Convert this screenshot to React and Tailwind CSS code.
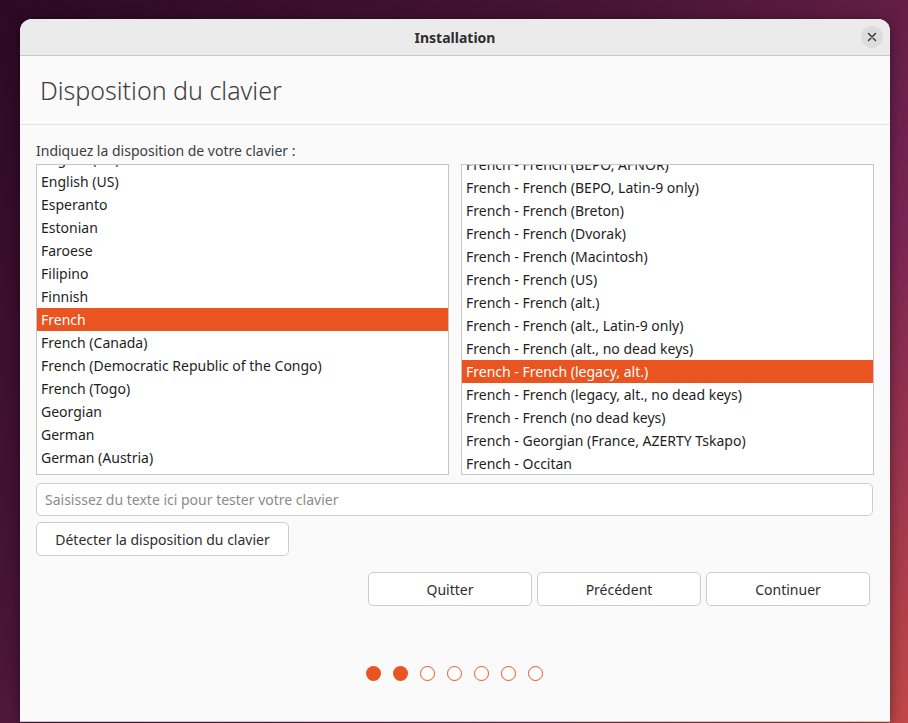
import React from "react";

const leftItems = [
  "English (UK)",
  "English (US)",
  "Esperanto",
  "Estonian",
  "Faroese",
  "Filipino",
  "Finnish",
  "French",
  "French (Canada)",
  "French (Democratic Republic of the Congo)",
  "French (Togo)",
  "Georgian",
  "German",
  "German (Austria)",
  "German (Switzerland)",
];

const rightItems = [
  "French - French (BEPO, AFNOR)",
  "French - French (BEPO, Latin-9 only)",
  "French - French (Breton)",
  "French - French (Dvorak)",
  "French - French (Macintosh)",
  "French - French (US)",
  "French - French (alt.)",
  "French - French (alt., Latin-9 only)",
  "French - French (alt., no dead keys)",
  "French - French (legacy, alt.)",
  "French - French (legacy, alt., no dead keys)",
  "French - French (no dead keys)",
  "French - Georgian (France, AZERTY Tskapo)",
  "French - Occitan",
  "French - Occitan (Lengadocian)",
];

function ListBox({ items, selected, offsetClass }) {
  return (
    <div className="h-[311px] overflow-hidden border border-[#c6c6c4] bg-white">
      <div className={offsetClass}>
        {items.map((it) => (
          <div
            key={it}
            className={
              "h-[23px] flex items-center pl-[4px] whitespace-nowrap text-[14px] " +
              (it === selected ? "bg-[#e95420] text-white" : "text-[#1e1e1e]")
            }
          >
            {it}
          </div>
        ))}
      </div>
    </div>
  );
}

function Dot({ filled }) {
  return (
    <div
      className={
        "w-[15px] h-[15px] rounded-full " +
        (filled ? "bg-[#e95420]" : "border-[1.5px] border-[#e95420] bg-white")
      }
    />
  );
}

export default function App() {
  return (
    <div
      className="w-[908px] h-[723px] overflow-hidden bg-[linear-gradient(135deg,#2c0924_0%,#4a1537_40%,#7b2553_70%,#c24848_100%)] pt-[19px] pl-[20px]"
      style={{ fontFamily: '"Noto Sans", "Open Sans", sans-serif' }}
    >
      <div className="w-[870px] h-[703px] rounded-t-[12px] bg-[#fafafa] shadow-[0_2px_14px_rgba(0,0,0,0.45)] flex flex-col border-b border-[#c8c8c8]">
        {/* header bar */}
        <div className="relative h-[37px] shrink-0 rounded-t-[12px] bg-[#ebebeb] border-b border-[#c9c9c9] flex items-center justify-center">
          <span className="text-[14px] font-bold text-[#2e2e2e]">Installation</span>
          <div className="absolute right-[7px] top-[7px] w-[22px] h-[22px] rounded-full bg-[#dcdcdc] flex items-center justify-center">
            <svg width="10" height="10" viewBox="0 0 10 10">
              <path d="M1.5 1.5 L8.5 8.5 M8.5 1.5 L1.5 8.5" stroke="#2e2e2e" strokeWidth="1.4" strokeLinecap="round" />
            </svg>
          </div>
        </div>

        {/* title */}
        <div className="h-[69px] shrink-0 border-b border-[#e3e3e3] flex items-center pl-[20px]">
          <h1 className="text-[25px] font-light text-[#3d3d3d] leading-none pt-[1px]">Disposition du clavier</h1>
        </div>

        {/* content */}
        <div className="flex flex-col px-[16px] pt-[17px]">
          <div className="text-[14px] text-[#3d3d3d] leading-[18px] h-[22px]">
            Indiquez la disposition de votre clavier :
          </div>
          <div className="grid grid-cols-2 gap-[12px]">
            <ListBox items={leftItems} selected="French" offsetClass="-mt-[18px]" />
            <ListBox items={rightItems} selected="French - French (legacy, alt.)" offsetClass="-mt-[12px]" />
          </div>

          <div className="mt-[8px] h-[33px] w-[837px] rounded-[5px] border border-[#cdcdcd] bg-white flex items-center px-[8px]">
            <span className="text-[14px] text-[#8b8b8b]">Saisissez du texte ici pour tester votre clavier</span>
          </div>

          <div className="mt-[6px] h-[34px] w-[253px] rounded-[5px] border border-[#cdcdcd] bg-white flex items-center justify-center">
            <span className="text-[14px] text-[#2e2e2e]">Détecter la disposition du clavier</span>
          </div>

          <div className="mt-[16px] flex justify-end gap-[5px] pr-[4px]">
            {["Quitter", "Précédent", "Continuer"].map((b) => (
              <div
                key={b}
                className="w-[164px] h-[34px] rounded-[5px] border border-[#cdcdcd] bg-white flex items-center justify-center text-[14px] text-[#2e2e2e]"
              >
                {b}
              </div>
            ))}
          </div>

          <div className="mt-[60px] flex justify-center gap-[12px] pr-[2px]">
            <Dot filled />
            <Dot filled />
            <Dot />
            <Dot />
            <Dot />
            <Dot />
            <Dot />
          </div>
        </div>
      </div>
    </div>
  );
}
